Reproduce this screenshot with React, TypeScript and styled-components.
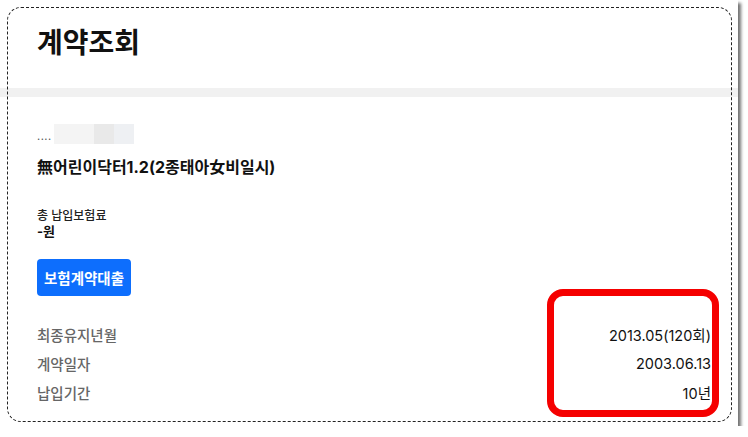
import React from "react";
import styled, { createGlobalStyle } from "styled-components";

const GlobalStyle = createGlobalStyle`
  html, body {
    margin: 0;
    padding: 0;
    background: #ffffff;
  }
  body {
    font-family: Inter, "Noto Sans CJK KR", "Noto Sans", sans-serif;
    color: #111;
  }
`;

const Frame = styled.div`
  position: relative;
  width: 738px;
  height: 426px;
  background: #fff;
  box-shadow: 3px 3px 3px rgba(0, 0, 0, 0.55);
  overflow: hidden;
`;

const DashedEdge = styled.div`
  position: absolute;
  top: 7px;
  left: 7px;
  right: 6px;
  bottom: 4px;
  border: 1px dashed #222;
  border-radius: 14px;
  pointer-events: none;
`;

const Header = styled.div`
  height: 88px;
  padding: 0 37px;
  display: flex;
  align-items: flex-start;
`;

const Title = styled.h1`
  margin: 0;
  padding-top: 24px;
  font-size: 28px;
  line-height: 38px;
  font-weight: 600;
  color: #111;
`;

const Band = styled.div`
  height: 9px;
  background: #f1f1f1;
`;

const Body = styled.div`
  padding: 27px 27px 0 37px;
  display: flex;
  flex-direction: column;
`;

const Masked = styled.div`
  display: flex;
  align-items: flex-end;
  height: 20px;
`;

const Dots = styled.span`
  font-size: 11px;
  line-height: 10px;
  color: #555;
  letter-spacing: 0.5px;
  margin-right: 2px;
  padding-bottom: 3px;
`;

const Blur = styled.span<{ $w: number; $c: string }>`
  display: inline-block;
  width: ${({ $w }) => $w}px;
  height: 20px;
  background: ${({ $c }) => $c};
`;

const Product = styled.div`
  margin-top: 12px;
  font-size: 16px;
  line-height: 22px;
  font-weight: 700;
  color: #111;
`;

const Total = styled.div`
  margin-top: 31px;
  display: flex;
  flex-direction: column;
`;

const TotalLabel = styled.span`
  font-size: 12px;
  line-height: 14px;
  font-weight: 500;
  color: #222;
`;

const TotalValue = styled.span`
  font-size: 13px;
  line-height: 16px;
  font-weight: 700;
  color: #111;
`;

const LoanButton = styled.button`
  margin-top: 20px;
  align-self: flex-start;
  height: 37px;
  padding: 0 7px;
  border: none;
  border-radius: 4px;
  background: #0d6efd;
  color: #fff;
  font-family: inherit;
  font-size: 14.5px;
  font-weight: 600;
`;

const Rows = styled.div`
  margin-top: 24px;
  display: flex;
  flex-direction: column;
`;

const Row = styled.div`
  display: flex;
  justify-content: space-between;
  align-items: center;
  height: 29px;
  font-size: 14.5px;
`;

const Label = styled.span`
  color: #666;
  font-weight: 500;
`;

const Value = styled.span`
  color: #111;
`;

const Highlight = styled.div`
  position: absolute;
  left: 547px;
  top: 289px;
  width: 172px;
  height: 128px;
  box-sizing: border-box;
  border: 7px solid #f50000;
  border-radius: 16px;
  pointer-events: none;
`;

const rows = [
  { label: "최종유지년월", value: "2013.05(120회)" },
  { label: "계약일자", value: "2003.06.13" },
  { label: "납입기간", value: "10년" },
];

export default function App() {
  return (
    <>
      <GlobalStyle />
      <Frame>
        <Header>
          <Title>계약조회</Title>
        </Header>
        <Band />
        <Body>
          <Masked>
            <Dots>....</Dots>
            <Blur $w={40} $c="#f4f4f4" />
            <Blur $w={20} $c="#e9e9e9" />
            <Blur $w={20} $c="#eef0f3" />
          </Masked>
          <Product>無어린이닥터1.2(2종태아女비일시)</Product>
          <Total>
            <TotalLabel>총 납입보험료</TotalLabel>
            <TotalValue>-원</TotalValue>
          </Total>
          <LoanButton>보험계약대출</LoanButton>
          <Rows>
            {rows.map((r) => (
              <Row key={r.label}>
                <Label>{r.label}</Label>
                <Value>{r.value}</Value>
              </Row>
            ))}
          </Rows>
        </Body>
        <DashedEdge />
        <Highlight />
      </Frame>
    </>
  );
}
